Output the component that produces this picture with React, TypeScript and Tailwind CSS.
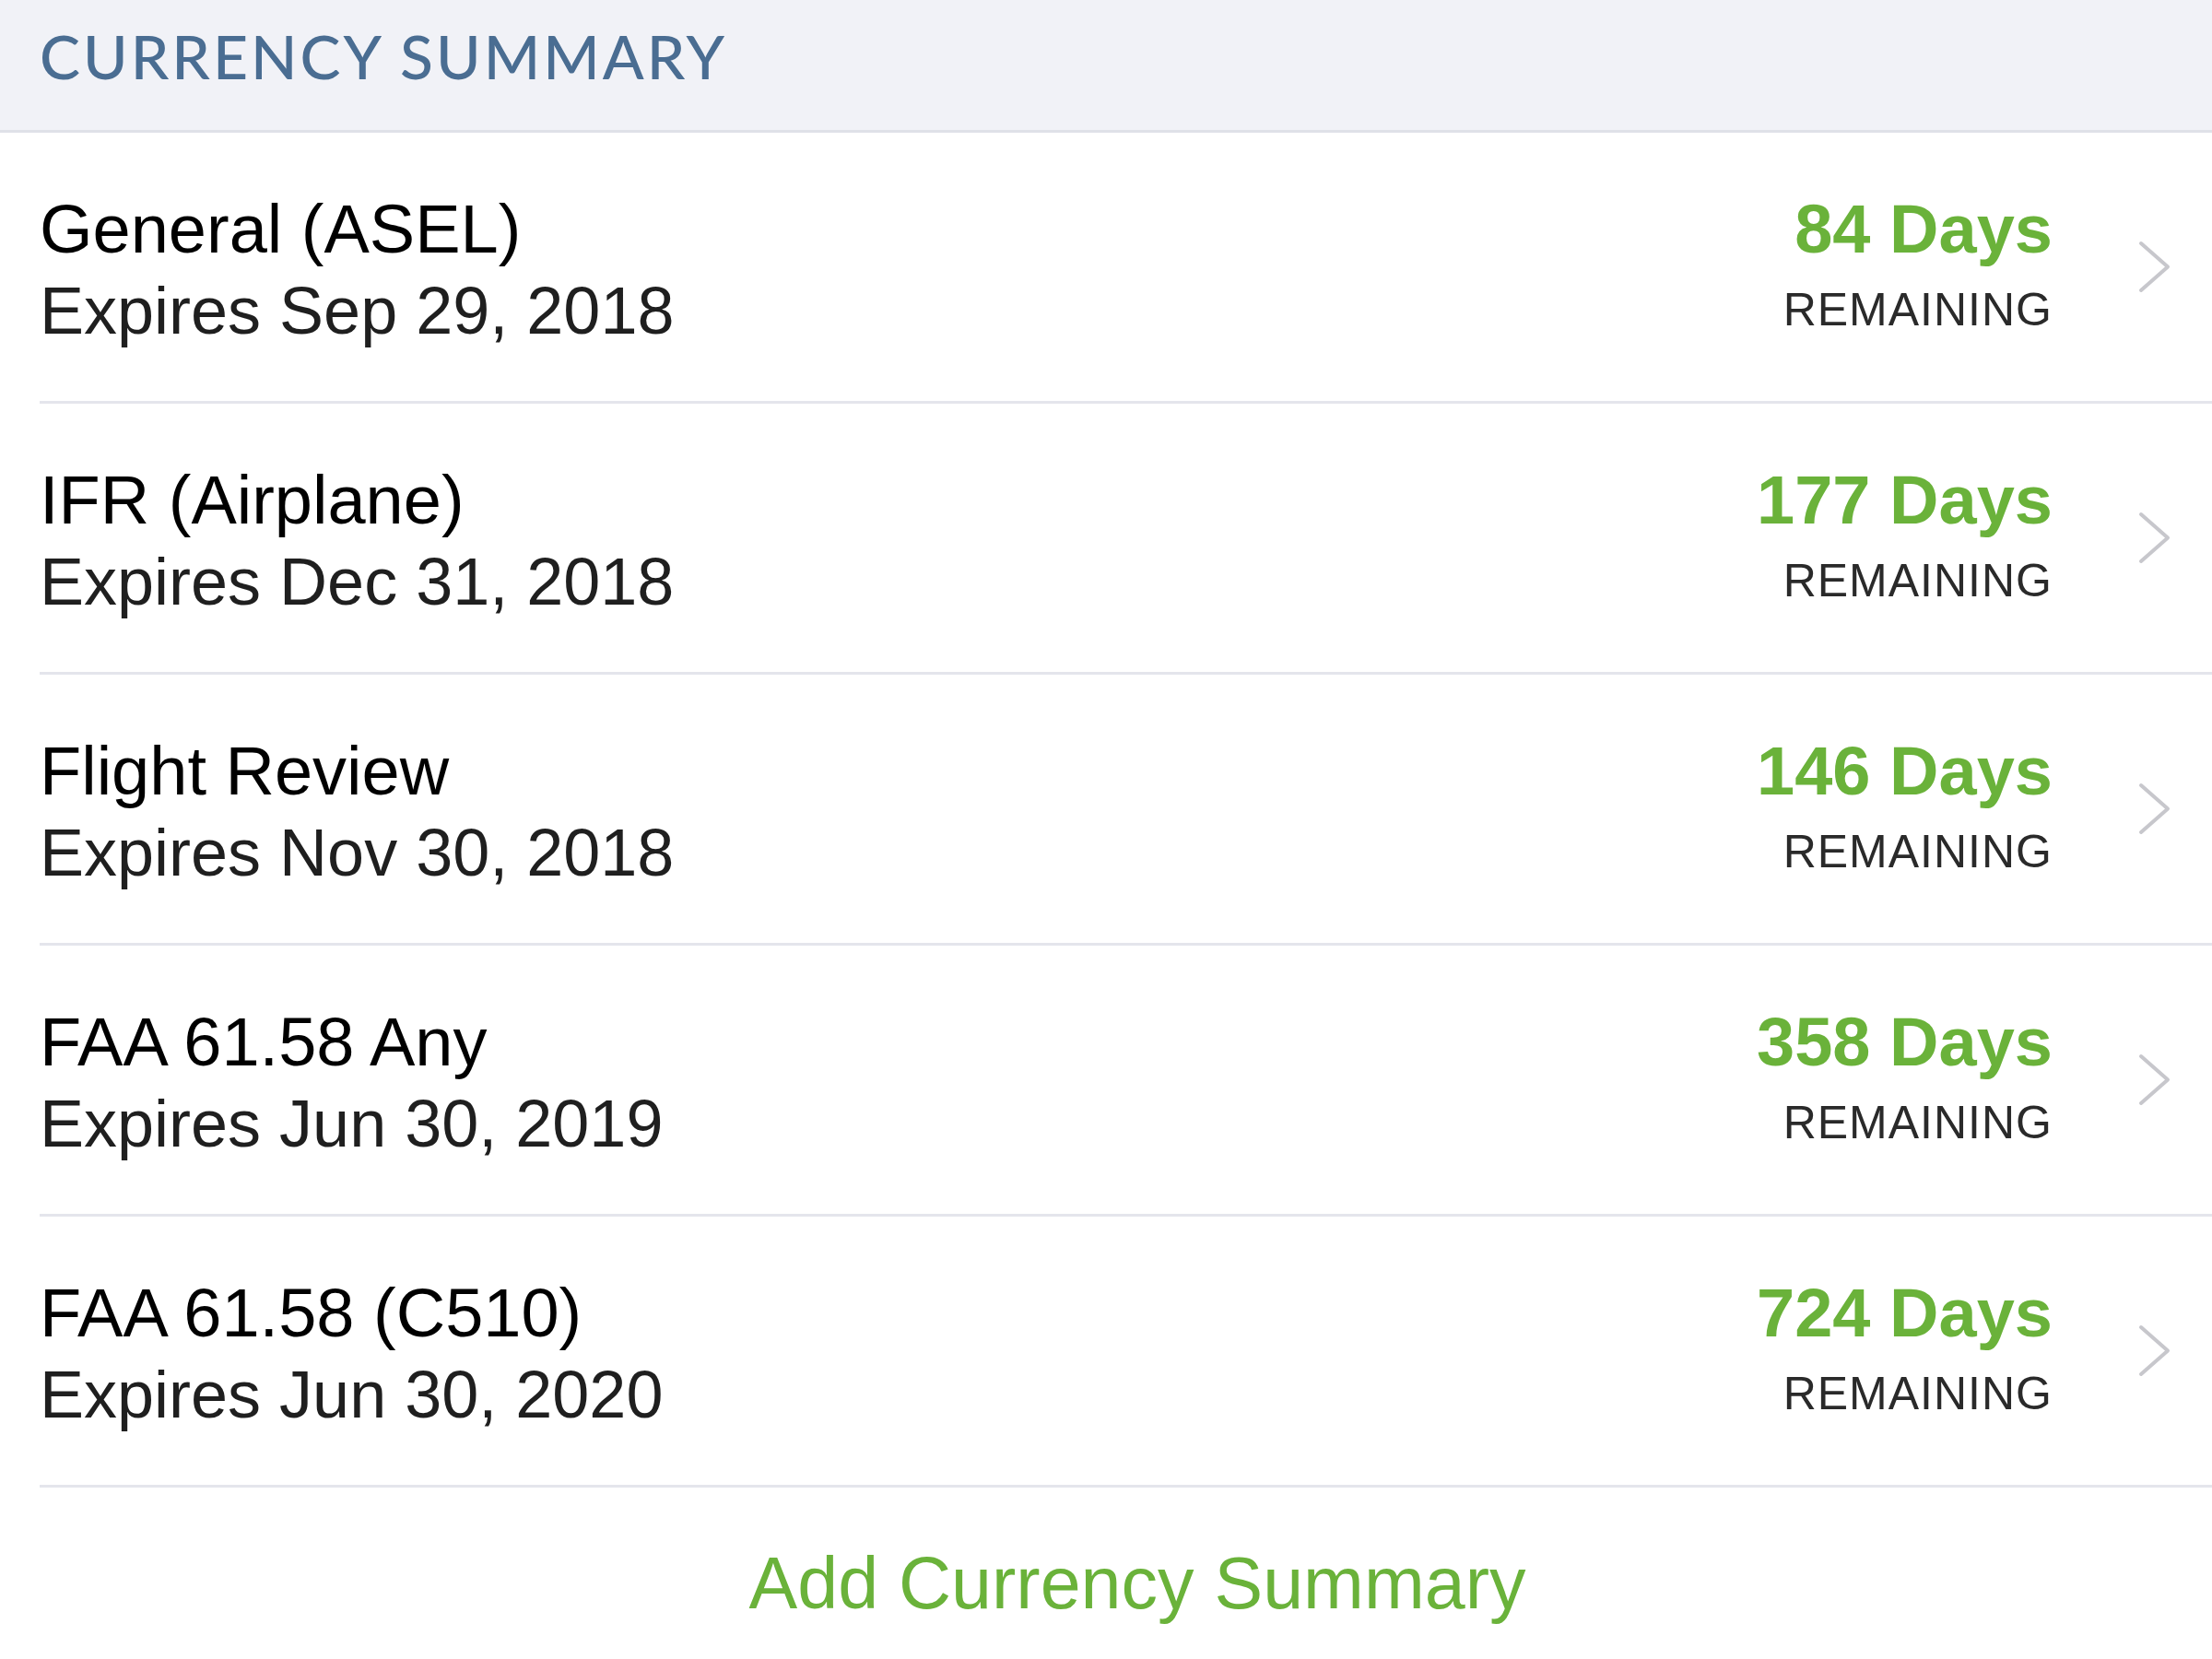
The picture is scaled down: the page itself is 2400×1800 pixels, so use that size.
import { ReactNode } from 'react'

const items = [
  { title: 'General (ASEL)', expires: 'Expires Sep 29, 2018', days: 84 },
  { title: 'IFR (Airplane)', expires: 'Expires Dec 31, 2018', days: 177 },
  { title: 'Flight Review', expires: 'Expires Nov 30, 2018', days: 146 },
  { title: 'FAA 61.58 Any', expires: 'Expires Jun 30, 2019', days: 358 },
  { title: 'FAA 61.58 (C510)', expires: 'Expires Jun 30, 2020', days: 724 },
]

function Chevron() {
  return (
    <svg width="35" height="57" viewBox="0 0 35 57" className="shrink-0">
      <polyline points="3,3 32,28.5 3,54" fill="none" stroke="#c7c7cc" strokeWidth="4" strokeLinecap="round" strokeLinejoin="round" />
    </svg>
  )
}

function Row({ children, right }: { children: ReactNode; right: ReactNode }) {
  return (
    <div className="ml-[43px] h-[294px] border-b-[3px] border-[#e4e5ec] flex items-start pr-[45px]">
      <div className="flex-1 pt-[60px]">{children}</div>
      <div className="pt-[60px] text-right">{right}</div>
      <div className="ml-[93px] self-center">
        <Chevron />
      </div>
    </div>
  )
}

export default function App() {
  return (
    <div className="w-[2400px] h-[1800px] bg-white overflow-hidden font-['Liberation_Sans']">
      <div className="h-[144px] bg-[#f1f2f7] border-b-[3px] border-[#dfe1e8] pl-[43px] pt-[28px]">
        <div className="font-['Lato'] font-medium text-[66px] leading-none tracking-[3px] text-[#4a6d92]">
          CURRENCY SUMMARY
        </div>
      </div>

      {items.map((item) => (
        <Row
          key={item.title}
          right={
            <>
              <div className="text-[74px] leading-[89px] font-bold text-[#6ab23a]">{item.days} Days</div>
              <div className="text-[50px] leading-[86px] tracking-[1px] text-[#2a2a2a]">REMAINING</div>
            </>
          }
        >
          <div className="text-[74px] leading-[89px] text-black">{item.title}</div>
          <div className="text-[72px] leading-[89px] text-[#1f1f1f]">{item.expires}</div>
        </Row>
      ))}

      <div className="pl-[68px] pt-[64px] text-center text-[79px] leading-none text-[#6ab23a]">
        Add Currency Summary
      </div>
    </div>
  )
}
